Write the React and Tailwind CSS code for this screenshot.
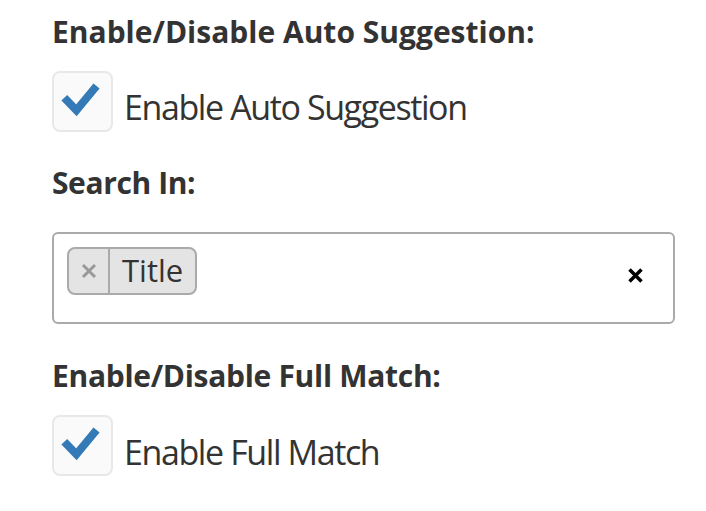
import { useState } from "react";

function CheckBox({ checked, onChange }) {
  return (
    <button
      type="button"
      onClick={onChange}
      className="flex h-[61px] w-[61px] shrink-0 items-center justify-center rounded-[8px] border-2 border-[#e8e8e8] bg-[#fafafa]"
    >
      {checked && (
        <svg width="61" height="61" viewBox="0 0 61 61">
          <polyline
            points="12,27.5 25,41 46.5,15"
            fill="none"
            stroke="#337ab7"
            strokeWidth="8.5"
            strokeLinecap="butt"
            strokeLinejoin="miter"
            transform="translate(-1,-1)"
          />
        </svg>
      )}
    </button>
  );
}

function CheckRow({ label, checked, onChange, labelPad }) {
  return (
    <label className="flex items-start gap-[11px]">
      <CheckBox checked={checked} onChange={onChange} />
      <span className={`${labelPad} text-[34px] leading-[38px] tracking-[-1.4px] text-[#333]`}>{label}</span>
    </label>
  );
}

export default function App() {
  const [autoSuggest, setAutoSuggest] = useState(true);
  const [fullMatch, setFullMatch] = useState(true);
  const [fields, setFields] = useState(["Title"]);

  return (
    <div className="min-h-[511px] w-[706px] bg-white pl-[52px] font-['Open_Sans',sans-serif] text-[#333]">
      <h3 className="pt-[16px] text-[30px] font-bold leading-[32px]">Enable/Disable Auto Suggestion:</h3>
      <div className="mt-[23px]">
        <CheckRow
          label="Enable Auto Suggestion"
          checked={autoSuggest}
          onChange={() => setAutoSuggest(!autoSuggest)}
          labelPad="pt-[17px]"
        />
      </div>

      <h3 className="mt-[35px] text-[30px] font-bold leading-[32px] tracking-[-0.4px]">Search In:</h3>
      <div className="mt-[33px] flex h-[92px] w-[623px] items-start justify-between rounded-[6px] border-2 border-[#aaa] pl-[13px] pt-[13px] pr-[30px]">
        <div className="flex gap-2">
          {fields.map((f) => (
            <span
              key={f}
              className="flex h-[48px] items-stretch rounded-[8px] border-2 border-[#aaa] bg-[#e4e4e4]"
            >
              <span className="flex w-[41px] items-center justify-center border-r-2 border-[#aaa]">
                <svg width="16" height="16" viewBox="0 0 16 16">
                  <path d="M2 2 L14 14 M14 2 L2 14" stroke="#999" strokeWidth="3" />
                </svg>
              </span>
              <span className="px-[12px] text-[31px] leading-[42px] text-[#333]">{f}</span>
            </span>
          ))}
        </div>
        <button type="button" className="mt-[21px]" onClick={() => setFields([])}>
          <svg width="15" height="15" viewBox="0 0 15 15" className="block">
            <path d="M1.5 1.5 L13.5 13.5 M13.5 1.5 L1.5 13.5" stroke="#000" strokeWidth="3.5" />
          </svg>
        </button>
      </div>

      <h3 className="mt-[36px] text-[30px] font-bold leading-[32px] tracking-[-0.3px]">Enable/Disable Full Match:</h3>
      <div className="mt-[23px]">
        <CheckRow
          label="Enable Full Match"
          checked={fullMatch}
          onChange={() => setFullMatch(!fullMatch)}
          labelPad="pt-[18px]"
        />
      </div>
    </div>
  );
}
